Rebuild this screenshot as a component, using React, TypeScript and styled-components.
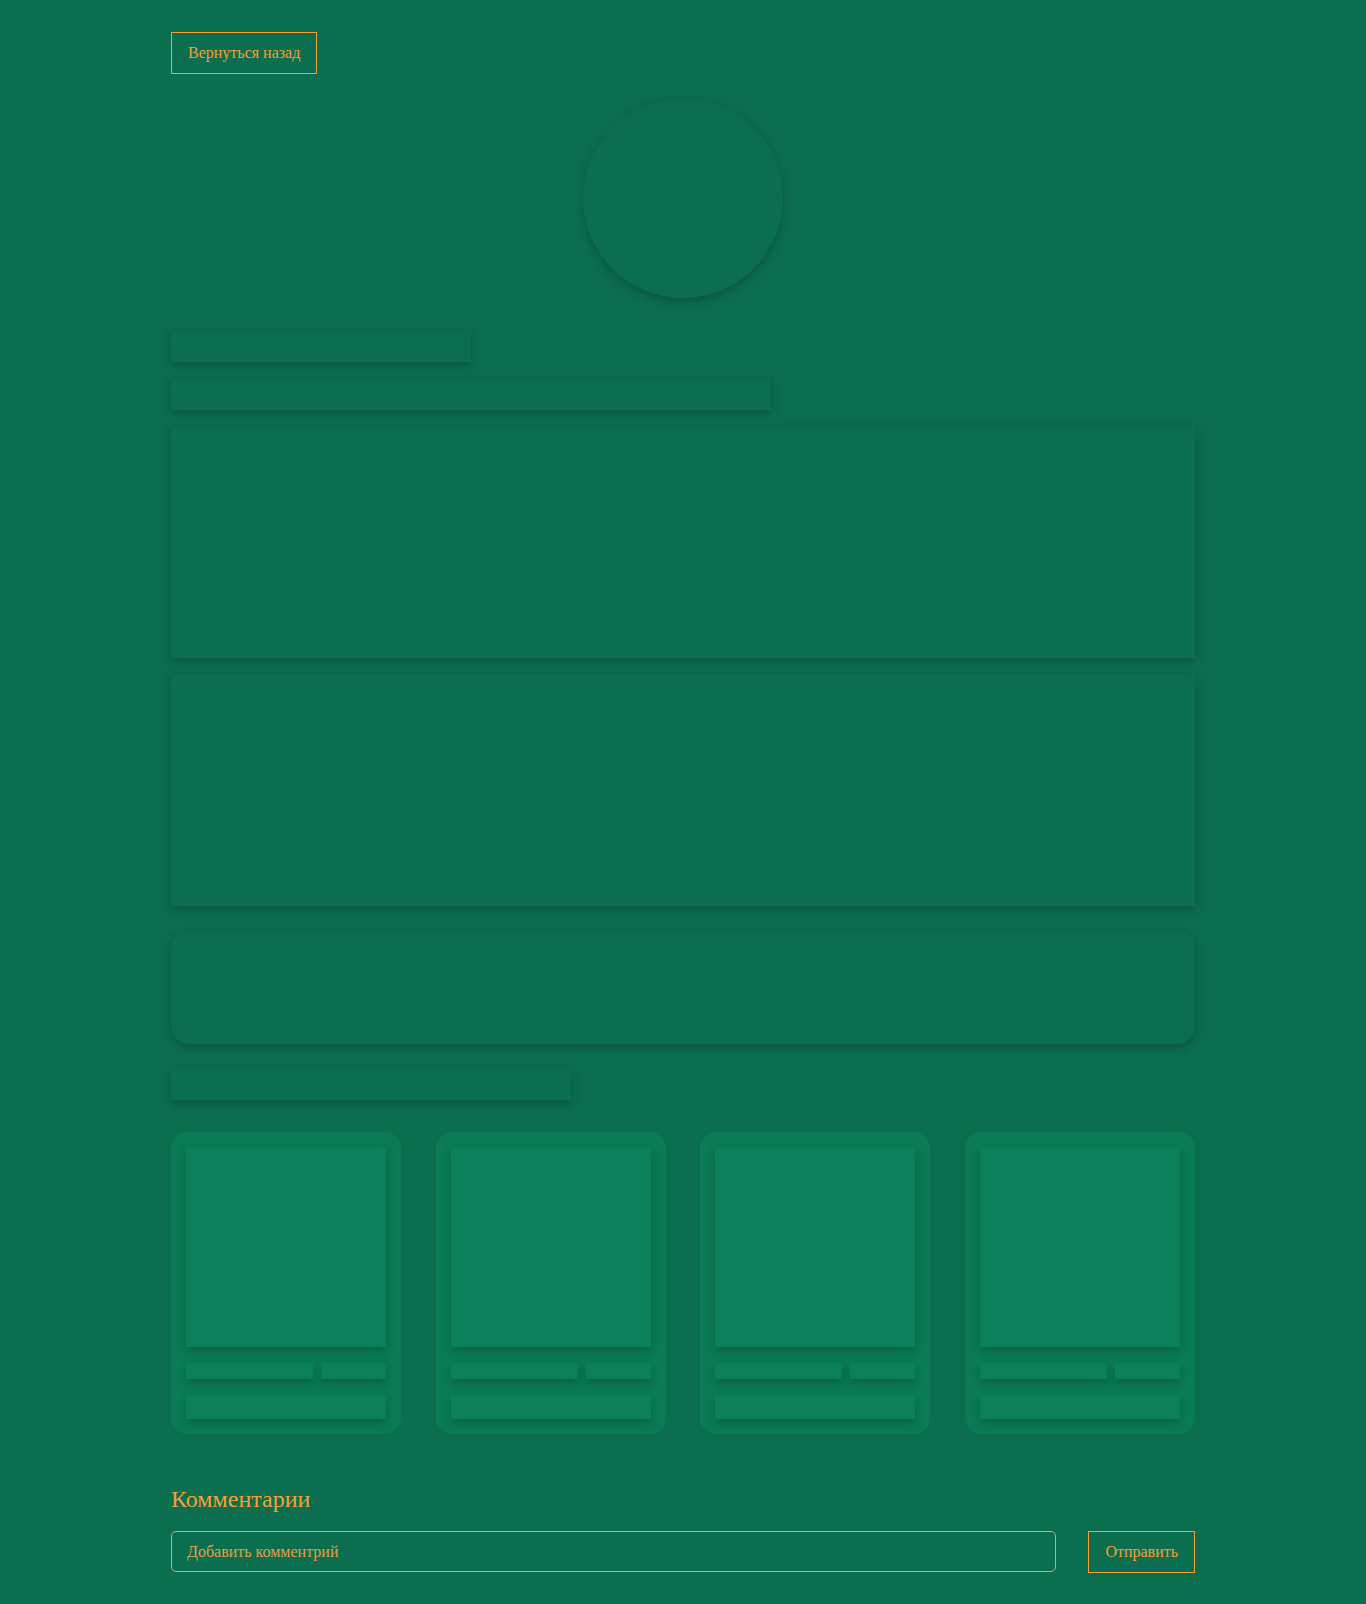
import styled, { createGlobalStyle } from "styled-components";

const orange = "#f4a035";
const bg = "#0b6e4f";

const GlobalStyle = createGlobalStyle`
  html, body {
    margin: 0;
    padding: 0;
    background: ${bg};
  }
  body {
    font-family: "Liberation Serif", "Times New Roman", serif;
  }
`;

const cards = [0, 1, 2, 3];

export default function App() {
  return (
    <>
      <GlobalStyle />
      <Page>
        <Top>
          <OutlineButton>Вернуться назад</OutlineButton>
        </Top>
        <Avatar />
        <Bar $width={300} $mt={32} />
        <Bar $width={600} $mt={16} />
        <Panel $mt={16} />
        <Panel $mt={16} />
        <RoundPanel />
        <Bar $width={400} $mt={24} />
        <Cards>
          {cards.map((i) => (
            <Card key={i}>
              <Cover />
              <CardRow>
                <Line $flex={127} />
                <Line $flex={65} />
              </CardRow>
              <CardButton />
            </Card>
          ))}
        </Cards>
        <Heading>Комментарии</Heading>
        <CommentForm>
          <CommentInput placeholder="Добавить комментрий" />
          <OutlineButton>Отправить</OutlineButton>
        </CommentForm>
      </Page>
    </>
  );
}

const Page = styled.div`
  max-width: 1024px;
  margin: 0 auto;
  padding: 32px 0 33px;
  display: flex;
  flex-direction: column;
`;

const Top = styled.div`
  display: flex;
`;

const OutlineButton = styled.button`
  font-family: "Liberation Serif", "Times New Roman", serif;
  font-size: 16px;
  color: ${orange};
  background: transparent;
  border: 1px solid ${orange};
  height: 42px;
  padding: 0 16px;
  cursor: pointer;
  flex-shrink: 0;
`;

const shadow = "0 4px 10px rgba(0, 0, 0, 0.22)";

const Avatar = styled.div`
  width: 200px;
  height: 200px;
  border-radius: 50%;
  margin: 24px auto 0;
  background: #0b6e50;
  box-shadow: ${shadow};
`;

const Bar = styled.div<{ $width: number; $mt: number }>`
  width: ${(p) => p.$width}px;
  height: 32px;
  margin-top: ${(p) => p.$mt}px;
  background: #0b6e50;
  box-shadow: ${shadow};
`;

const Panel = styled.div<{ $mt: number }>`
  height: 232px;
  margin-top: ${(p) => p.$mt}px;
  background: #0b6e50;
  box-shadow: ${shadow};
`;

const RoundPanel = styled.div`
  height: 114px;
  margin-top: 24px;
  border-radius: 18px;
  background: #0b6e50;
  box-shadow: ${shadow};
`;

const Cards = styled.div`
  display: flex;
  justify-content: space-between;
  margin-top: 32px;
`;

const Card = styled.div`
  width: 230px;
  box-sizing: border-box;
  padding: 15px;
  border-radius: 16px;
  background: #0a7b56;
  display: flex;
  flex-direction: column;
`;

const Cover = styled.div`
  width: 200px;
  height: 200px;
  background: #0a7f5a;
  box-shadow: ${shadow};
`;

const CardRow = styled.div`
  display: flex;
  gap: 8px;
  margin-top: 16px;
`;

const Line = styled.div<{ $flex: number }>`
  flex: ${(p) => p.$flex};
  height: 16px;
  background: #0a7f5a;
  box-shadow: ${shadow};
`;

const CardButton = styled.div`
  height: 24px;
  margin-top: 16px;
  background: #0a7f5a;
  box-shadow: ${shadow};
`;

const Heading = styled.h2`
  margin: 52px 0 0;
  font-size: 24px;
  font-weight: 400;
  line-height: 27px;
  color: ${orange};
`;

const CommentForm = styled.div`
  display: flex;
  gap: 32px;
  margin-top: 18px;
`;

const CommentInput = styled.input`
  flex: 1;
  height: 41px;
  box-sizing: border-box;
  padding: 0 15px;
  border: 1px solid ${orange};
  border-radius: 5px;
  background: transparent;
  color: ${orange};
  font-family: "Liberation Serif", "Times New Roman", serif;
  font-size: 16px;
  outline: none;

  &::placeholder {
    color: #e3a045;
    opacity: 1;
  }
`;
